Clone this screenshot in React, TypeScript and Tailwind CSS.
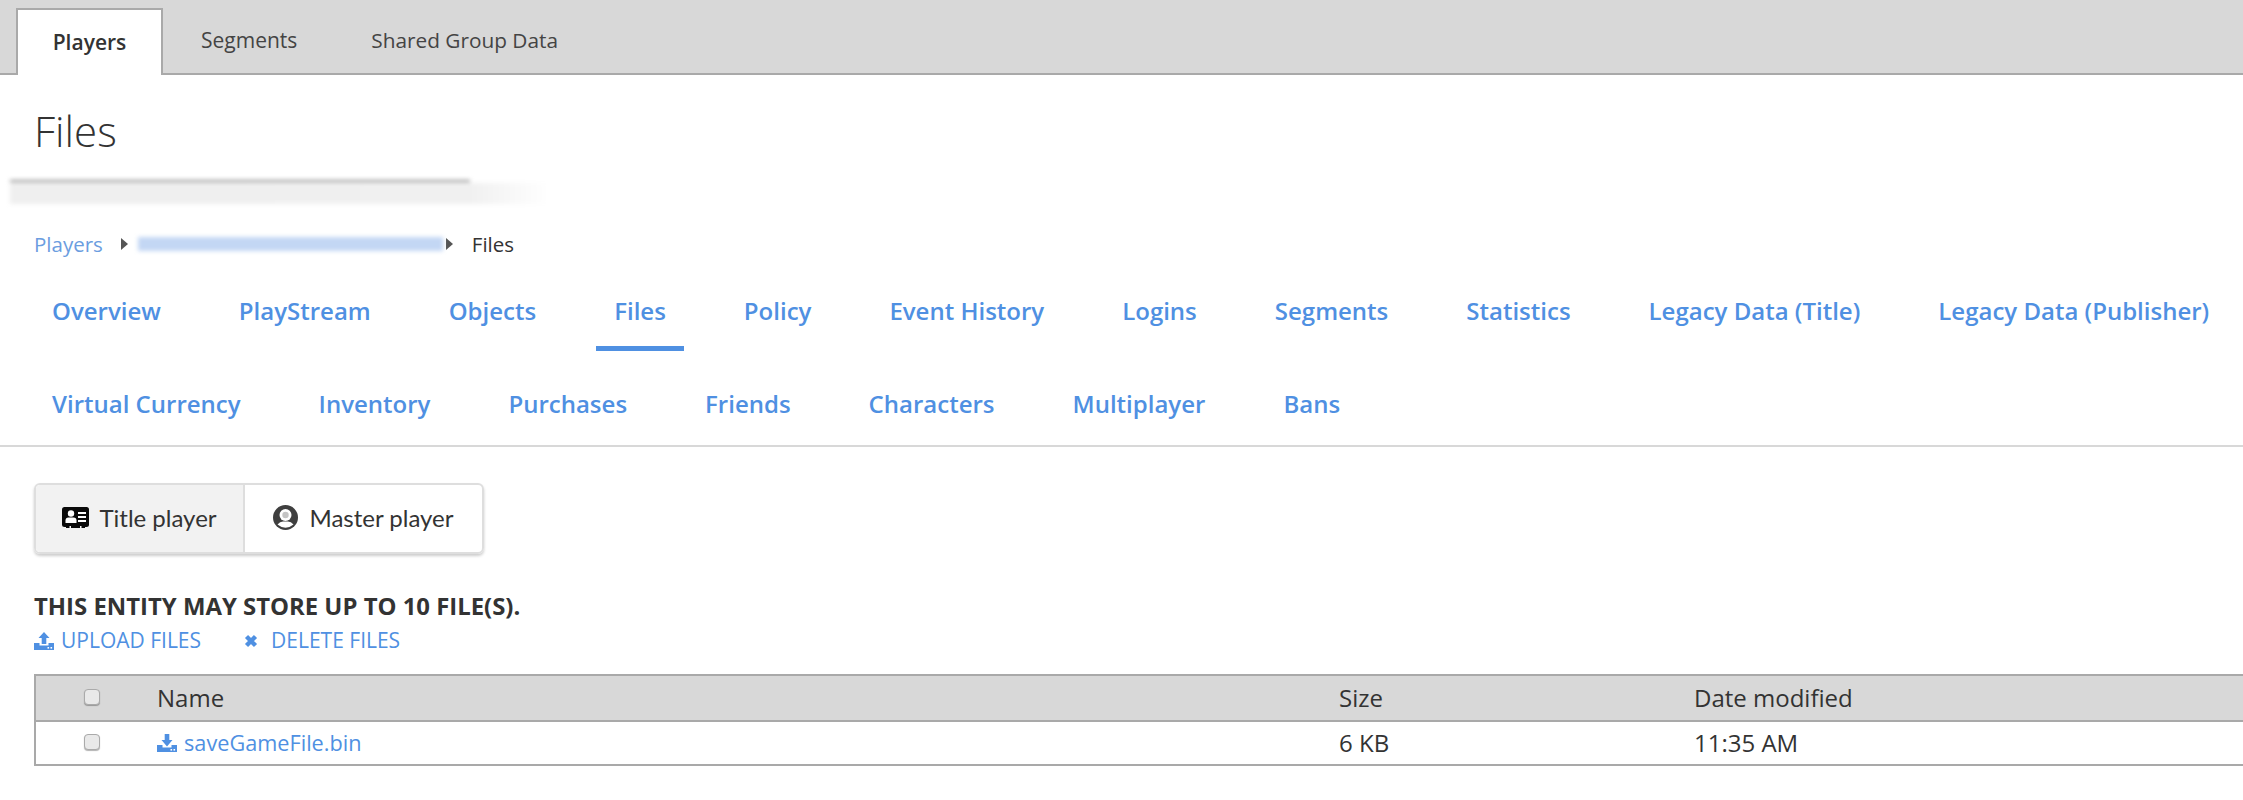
import React from 'react';

const navRows = [
  ['Overview', 'PlayStream', 'Objects', 'Files', 'Policy', 'Event History', 'Logins', 'Segments', 'Statistics', 'Legacy Data (Title)', 'Legacy Data (Publisher)'],
  ['Virtual Currency', 'Inventory', 'Purchases', 'Friends', 'Characters', 'Multiplayer', 'Bans'],
];

function Checkbox() {
  return <span className="mb-[3px] block h-[16px] w-[16px] rounded-[4px] border border-[#aaa] bg-[#e9e9e9] shadow-[0_1px_1px_rgba(0,0,0,0.3)]" />;
}

function Caret() {
  return <span className="block h-0 w-0 border-y-[6px] border-l-[7px] border-y-transparent border-l-[#555]" />;
}

function IdCardIcon() {
  return (
    <svg width="27" height="21" viewBox="0 0 27 21">
      <rect width="27" height="20" rx="2.5" fill="#0a0a0a" />
      <rect x="4" y="19" width="19" height="2" fill="#0a0a0a" />
      <rect x="7.5" y="19" width="1.5" height="2" fill="#f2f2f2" />
      <rect x="18" y="19" width="1.5" height="2" fill="#f2f2f2" />
      <circle cx="9" cy="6.5" r="3.2" fill="#fff" />
      <path d="M3.5 16 V13.5 Q3.5 10.5 6.5 10.5 H11.5 Q14.5 10.5 14.5 13.5 V16 Z" fill="#fff" />
      <rect x="16" y="5" width="8" height="2" fill="#fff" />
      <rect x="16" y="9" width="8" height="2" fill="#fff" />
      <rect x="16" y="13" width="8" height="2" fill="#fff" />
    </svg>
  );
}

function UserCircleIcon() {
  return (
    <svg width="25" height="25" viewBox="0 0 25 25">
      <circle cx="12.5" cy="12.5" r="12.5" fill="#3f3f3f" />
      <circle cx="12.5" cy="10" r="6" fill="#fff" />
      <circle cx="12.5" cy="10" r="3.2" fill="#c4c4c4" />
      <path d="M4.5 19.5 Q7 16.5 10 16.5 H15 Q18 16.5 20.5 19.5 Q16.5 22.8 12.5 22.8 Q8.5 22.8 4.5 19.5 Z" fill="#fff" />
    </svg>
  );
}

function TrayIcon({ arrow }: { arrow: string }) {
  return (
    <svg width="20" height="18" viewBox="0 0 20 18" fill="#4f90e2" className="shrink-0">
      <path d={arrow} />
      <path d="M0 11 H5.5 V13.5 H14.5 V11 H20 V18 H0 Z" />
      <rect x="13.5" y="15" width="1.6" height="1.6" fill="#fff" />
      <rect x="16.5" y="15" width="1.6" height="1.6" fill="#fff" />
    </svg>
  );
}

function CrossIcon() {
  return (
    <svg width="14" height="14" viewBox="0 0 14 14" className="shrink-0">
      <path d="M2.5 2.5 L11.5 11.5 M11.5 2.5 L2.5 11.5" stroke="#4f90e2" strokeWidth="4.4" />
    </svg>
  );
}

export default function App() {
  return (
    <div className="h-[800px] w-[2243px] overflow-hidden bg-white font-['Open_Sans',sans-serif] text-[#333]">
      <div className="flex h-[75px] items-end border-b-2 border-[#a9a9a9] bg-[#d8d8d8] pl-[16px]">
        <div className="relative top-[2px] flex h-[67px] w-[147px] items-center justify-center border-x-2 border-t-2 border-[#a9a9a9] bg-white text-[21px] font-semibold">Players</div>
        <div className="flex h-[67px] items-center pl-[38px] pt-[2px] text-[21px] text-[#444]">Segments</div>
        <div className="flex h-[67px] items-center pl-[74px] pt-[2px] text-[20.8px] text-[#444]">Shared Group Data</div>
      </div>

      <h1 className="ml-[34px] mt-[31px] h-[50px] text-[42px] font-light leading-[50px]">Files</h1>

      <div className="ml-[10px] mt-[24px] h-[24px] w-[540px] blur-[2px]">
        <div className="h-[2px] w-[460px] bg-[#8c8c8c]" />
        <div className="mt-[1px] h-[21px] w-[540px] bg-[linear-gradient(90deg,#efefef_0%,#f0f0f0_85%,#ffffff_100%)]" />
      </div>

      <div className="ml-[34px] mt-[25px] flex h-[30px] items-center text-[20.5px]">
        <span className="text-[#6b9de0]">Players</span>
        <span className="ml-[18px]"><Caret /></span>
        <span className="ml-[10px] h-[14px] w-[305px] bg-[#c3d7f4] blur-[2px]" />
        <span className="ml-[3px]"><Caret /></span>
        <span className="ml-[19px]">Files</span>
      </div>

      <div className="border-b-2 border-[#d8d8d8] pb-[4px] pl-[34px] pt-[17px]">
        {navRows.map((row, i) => (
          <div key={i} className={'flex gap-[42px] text-[24px] font-semibold text-[#4f90e2] ' + (i === 0 ? 'h-[93px]' : 'h-[72px]')}>
            {row.map((item) => (
              <span key={item} className={'flex h-[75px] items-center border-b-[5px] px-[18px] ' + (item === 'Files' ? 'border-[#4f90e2]' : 'border-transparent')}>{item}</span>
            ))}
          </div>
        ))}
      </div>

      <div className="ml-[34px] mt-[36px] flex h-[71px] w-[450px] overflow-hidden rounded-[6px] border-2 border-[#dedede] font-['Lato',sans-serif] text-[24px] shadow-[0_2px_3px_rgba(0,0,0,0.2)]">
        <div className="flex w-[209px] items-center justify-center gap-[10px] border-r-2 border-[#dedede] bg-[#f2f2f2] pb-[2px]">
          <IdCardIcon />
          Title player
        </div>
        <div className="flex flex-1 items-center justify-center gap-[11px] pb-[2px]">
          <UserCircleIcon />
          Master player
        </div>
      </div>

      <div className="ml-[34px] mt-[37px] text-[23.9px] font-bold leading-[30px]">THIS ENTITY MAY STORE UP TO 10 FILE(S).</div>
      <div className="ml-[34px] mt-[5px] flex h-[30px] items-center text-[21px] font-medium text-[#4f90e2]">
        <TrayIcon arrow="M10 0 L15.5 6 H12.3 V12 H7.7 V6 H4.5 Z" />
        <span className="ml-[7px]">UPLOAD FILES</span>
        <span className="ml-[43px]"><CrossIcon /></span>
        <span className="ml-[13px]">DELETE FILES</span>
      </div>

      <div className="ml-[34px] mt-[18px] border-2 border-r-0 border-[#a9a9a9] text-[24px]">
        <div className="flex h-[44px] items-center bg-[#d8d8d8] font-medium">
          <span className="ml-[48px] w-[73px]"><Checkbox /></span>
          <span className="w-[1182px]">Name</span>
          <span className="w-[355px]">Size</span>
          <span>Date modified</span>
        </div>
        <div className="flex h-[44px] items-center border-t-2 border-[#a9a9a9]">
          <span className="ml-[48px] w-[73px]"><Checkbox /></span>
          <span className="flex w-[1182px] items-center text-[21.7px] text-[#4f90e2]">
            <TrayIcon arrow="M7.7 0 H12.3 V6 H15.5 L10 12.5 L4.5 6 H7.7 Z" />
            <span className="ml-[7px]">saveGameFile.bin</span>
          </span>
          <span className="w-[355px]">6 KB</span>
          <span>11:35 AM</span>
        </div>
      </div>
    </div>
  );
}
